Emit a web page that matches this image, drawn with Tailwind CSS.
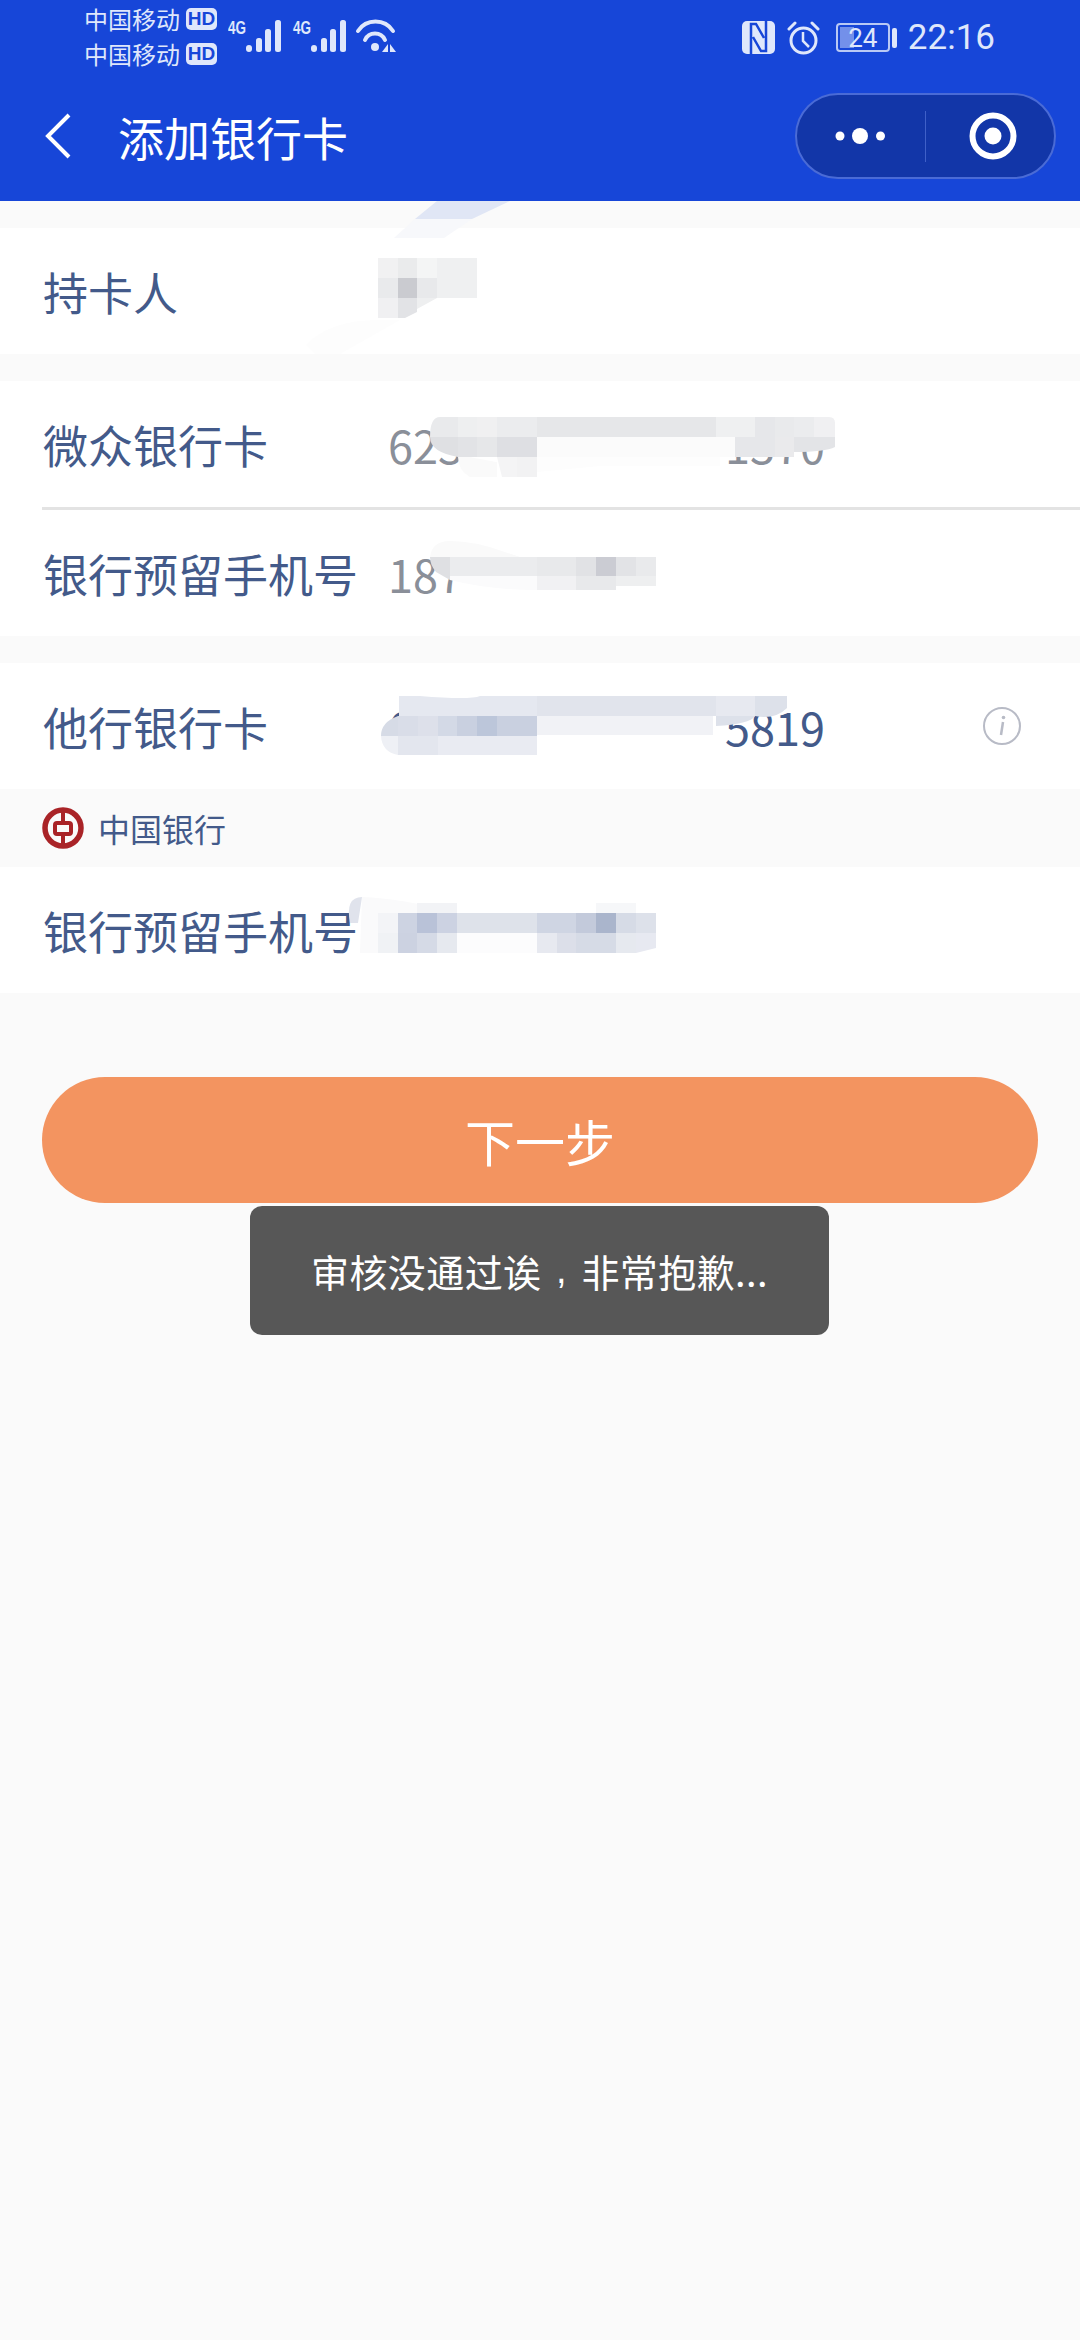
<!DOCTYPE html>
<html lang="zh-CN">
<head>
    <meta charset="UTF-8">
    <meta name="viewport" content="width=device-width, initial-scale=1.0">
    <title>添加银行卡</title>
    <script src="https://cdn.jsdelivr.net/npm/@tailwindcss/browser@4"></script>
</head>
<body class="relative bg-[#fafafa] h-[2340px] w-[1080px] overflow-hidden font-['Noto_Sans_CJK_SC',sans-serif]">
    <!-- Header -->
    <header class="bg-[#1746d8] h-[201px] text-white">
        <!-- Status bar -->
        <div class="flex items-start h-[72px] text-[#dfe7fb]">
            <div class="ml-[84px] mt-[1px] flex flex-col text-[24px] leading-[35px]">
                <div class="flex items-center">中国移动<span class="ml-[6px] bg-[#dfe7fb] text-[#1746d8] rounded-[5px] w-[31px] h-[22px] flex items-center justify-center text-[19px] font-bold font-['Liberation_Sans',sans-serif]">HD</span></div>
                <div class="flex items-center">中国移动<span class="ml-[6px] bg-[#dfe7fb] text-[#1746d8] rounded-[5px] w-[31px] h-[22px] flex items-center justify-center text-[19px] font-bold font-['Liberation_Sans',sans-serif]">HD</span></div>
            </div>
            <svg class="ml-[11px] mt-[16px]" width="170" height="40" viewBox="0 0 170 40" fill="#dfe7fb">
                <text x="0" y="18" font-size="19" font-weight="700" font-family="Liberation Sans" textLength="18" lengthAdjust="spacingAndGlyphs">4G</text>
                <rect x="18" y="29" width="6" height="7" rx="3"/><rect x="28" y="22" width="6" height="14" rx="2.5"/><rect x="37" y="13" width="6" height="23" rx="2.5"/><rect x="47" y="4" width="6" height="32" rx="2.5"/>
                <text x="65" y="18" font-size="19" font-weight="700" font-family="Liberation Sans" textLength="18" lengthAdjust="spacingAndGlyphs">4G</text>
                <rect x="83" y="29" width="6" height="7" rx="3"/><rect x="93" y="22" width="6" height="14" rx="2.5"/><rect x="102" y="13" width="6" height="23" rx="2.5"/><rect x="112" y="4" width="6" height="32" rx="2.5"/>
                <g fill="none" stroke="#dfe7fb" stroke-width="4" stroke-linecap="round">
                    <path d="M130 15 A21 21 0 0 1 165 15"/><path d="M137 24 A11 11 0 0 1 157 24"/>
                </g>
                <circle cx="147" cy="31" r="4"/><path d="M160 28 V36 H154 Z M162 28 L168 36 H162 Z"/>
            </svg>
            <div class="ml-auto flex items-center mt-[20px] mr-[85px]">
                <svg width="33" height="33" viewBox="0 0 33 33">
                    <rect x="0" y="0" width="33" height="33" rx="5" fill="#dfe7fb"/>
                    <path d="M9 33 V3 H14 L22 17 M24 0 V30 H19 L11 16" fill="none" stroke="#1746d8" stroke-width="2.5"/>
                </svg>
                <svg class="ml-[12px]" width="33" height="34" viewBox="0 0 33 34" fill="none" stroke="#dfe7fb" stroke-width="3">
                    <circle cx="16.5" cy="19.5" r="12.5"/><path d="M16 11 V20 L22 26" stroke-width="2.5"/><path d="M2 8 L8 2 M31 8 L25 2" stroke-linecap="round"/>
                </svg>
                <div class="ml-[16px] relative w-[54px] h-[29px] border-2 border-[#b9c9f5] rounded-[4px] flex items-center justify-center text-[26px] leading-none font-['Roboto',sans-serif]">
                    <div class="absolute left-[2px] top-[2px] bottom-[2px] w-[14px] bg-[#7390ea]"></div>
                    <span class="relative">24</span>
                </div>
                <div class="ml-[2px] w-[5px] h-[20px] bg-[#dfe7fb] rounded-[2px]"></div>
                <div class="ml-[11px] text-[35px] leading-none font-['Roboto',sans-serif]">22:16</div>
            </div>
        </div>
        <!-- Nav bar -->
        <div class="flex items-center h-[129px] pb-[1px]">
            <svg class="ml-[44px]" width="27" height="46" viewBox="0 0 27 46" fill="none" stroke="white" stroke-width="4">
                <path d="M25 2 L4 23 L25 44"/>
            </svg>
            <h1 class="ml-[47px] text-[46px] leading-none font-normal">添加银行卡</h1>
            <div class="ml-auto mr-[24px] w-[261px] h-[86px] rounded-full bg-[#1236a8] border-2 border-[#4a6bd6] flex items-center">
                <svg class="ml-[29px]" width="60" height="20" viewBox="0 0 60 20" fill="white">
                    <circle cx="14" cy="10" r="4.5"/><circle cx="34" cy="10" r="8"/><circle cx="54.5" cy="10" r="4.5"/>
                </svg>
                <div class="ml-[39px] w-[1px] h-[51px] bg-[#3f60c8]"></div>
                <svg class="ml-[43px]" width="48" height="48" viewBox="0 0 48 48">
                    <circle cx="24" cy="24" r="20.5" fill="none" stroke="white" stroke-width="6"/><circle cx="24" cy="24" r="8.5" fill="white"/>
                </svg>
            </div>
        </div>
    </header>

    <main class="text-[#435a8a] text-[45px] leading-none">
        <section class="mt-[27px] bg-white h-[126px] flex items-center pl-[43px]">持卡人</section>

        <section class="mt-[27px] bg-white">
            <div class="h-[126px] flex items-center pl-[43px]">
                <span class="w-[345px]">微众银行卡</span>
                <span class="w-[437px] flex justify-between text-[#8a8f99]"><span>623</span><span>1370</span></span>
            </div>
            <div class="ml-[42px] h-[3px] bg-[#e3e3e3]"></div>
            <div class="h-[126px] flex items-center pl-[43px]">
                <span class="w-[345px]">银行预留手机号</span>
                <span class="text-[#8a8f99]">187</span>
            </div>
        </section>

        <section class="mt-[27px] bg-white h-[126px] flex items-center pl-[43px] pr-[58px]">
            <span class="w-[345px]">他行银行卡</span>
            <span class="w-[437px] flex justify-between"><span>6217</span><span>5819</span></span>
            <svg class="ml-auto" width="40" height="40" viewBox="0 0 40 40" fill="none">
                <circle cx="20" cy="20" r="18" stroke="#b8bbc6" stroke-width="2"/>
                <path d="M21 16 L19 29" stroke="#b8bbc6" stroke-width="2.5"/><circle cx="21.5" cy="11.5" r="1.8" fill="#b8bbc6"/>
            </svg>
        </section>
        <div class="h-[78px] flex items-center pl-[42px] text-[32px]">
            <svg width="42" height="42" viewBox="0 0 42 42" fill="none" stroke="#a92327">
                <circle cx="21" cy="21" r="18" stroke-width="5.5"/>
                <rect x="13" y="16" width="16" height="11" rx="2" stroke-width="4"/>
                <path d="M21 4 V16 M21 27 V38" stroke-width="4"/>
            </svg>
            <span class="ml-[14px]">中国银行</span>
        </div>
        <section class="bg-white h-[126px] flex items-center pl-[43px]">银行预留手机号</section>

        <div class="mt-[84px] mx-[42px] h-[126px] rounded-full bg-[#f39460] text-white text-[50px] flex items-center justify-center">下一步</div>
    </main>

    <!-- Toast -->
    <div class="absolute left-[250px] top-[1206px] w-[579px] h-[129px] rounded-[12px] bg-[#575757] text-white text-[38px] tracking-[0.4px] flex items-center justify-center">审核没通过诶<span class="w-[40px] text-center font-['Liberation_Sans',sans-serif]">,</span>非常抱歉...</div>

    <!-- Redaction smears over the values -->
    <svg class="absolute left-0 top-0 pointer-events-none" width="1080" height="1000" viewBox="0 0 1080 1000">
        <path d="M437 201 H510 L472 219 H415 Z" fill="#e0e6f5"/>
        <path d="M415 219 H472 L444 238 H394 Z" fill="#f7f8fb"/>
        <path d="M306 345 Q330 320 378 320 H400 L340 354 H316 Z" fill="#fdfdfd"/>
        <!-- holder name -->
        <rect x="378" y="258" width="20" height="20" fill="#f1f1f2"/><rect x="398" y="258" width="19" height="20" fill="#eaebec"/><rect x="417" y="258" width="20" height="20" fill="#f4f5f5"/><rect x="437" y="258" width="40" height="40" fill="#eff0f1"/>
        <rect x="378" y="278" width="20" height="20" fill="#e9eaec"/><rect x="398" y="278" width="19" height="20" fill="#cacbd0"/><rect x="417" y="278" width="20" height="20" fill="#e8e9eb"/>
        <rect x="378" y="298" width="20" height="20" fill="#f0f0f2"/><path d="M398 298 H417 V312 L405 318 H398 Z" fill="#e2e3e6"/><path d="M417 298 H437 L417 309 Z" fill="#eeeff0"/>
        <!-- card number -->
        <path d="M430 437 Q430 417 440 417 H458 V437 Z" fill="#e9eaec"/><rect x="458" y="417" width="19" height="20" fill="#eeeff0"/><rect x="477" y="417" width="20" height="20" fill="#f0f0f1"/><rect x="497" y="417" width="40" height="20" fill="#ebecee"/><rect x="537" y="417" width="179" height="20" fill="#e6e7e9"/><rect x="716" y="417" width="39" height="20" fill="#eff0f1"/><rect x="755" y="417" width="20" height="20" fill="#e6e7ea"/><rect x="775" y="417" width="19" height="20" fill="#e9eaec"/><rect x="794" y="417" width="20" height="20" fill="#ebecee"/><path d="M814 417 H829 Q835 417 835 423 V437 H814 Z" fill="#f0f0f2"/>
        <path d="M430 437 H458 V457 Q430 452 430 437 Z" fill="#dfe0e3"/><rect x="458" y="437" width="19" height="20" fill="#e2e3e6"/><rect x="477" y="437" width="20" height="20" fill="#e6e7e9"/><rect x="497" y="437" width="40" height="20" fill="#dedfe3"/><rect x="537" y="437" width="198" height="20" fill="#fbfbfb"/><rect x="735" y="437" width="40" height="20" fill="#e6e7ea"/><rect x="775" y="437" width="19" height="20" fill="#eaeaec"/><path d="M794 437 H835 V447 Q825 452 794 452 Z" fill="#e3e4e7"/>
        <path d="M458 457 H470 Q495 462 497 462 V477 H470 Q458 470 458 457 Z" fill="#fafafa"/><path d="M497 457 H517 V477 H502 Z" fill="#f4f4f5"/><rect x="517" y="457" width="20" height="20" fill="#f2f2f3"/><path d="M537 457 H720 V466 H600 L537 472 Z" fill="#fdfdfd"/>
        <!-- phone -->
        <path d="M430 557 Q432 541 450 541 Q475 541 505 552 L520 557 Z" fill="#fafafa"/>
        <path d="M430 557 H450 V580 L436 572 Q430 565 430 557 Z" fill="#dfe0e3"/><rect x="450" y="557" width="87" height="19" fill="#ebecee"/><rect x="537" y="557" width="39" height="19" fill="#e8e9eb"/><rect x="576" y="557" width="20" height="19" fill="#e1e2e5"/><rect x="596" y="557" width="20" height="19" fill="#cbccd3"/><rect x="616" y="557" width="20" height="19" fill="#e2e3e6"/><rect x="636" y="557" width="20" height="19" fill="#e9eaec"/>
        <path d="M450 576 H537 V590 Q490 590 450 580 Z" fill="#fbfbfc"/><rect x="537" y="576" width="39" height="14" fill="#f1f1f3"/><rect x="576" y="576" width="40" height="14" fill="#e8e9eb"/><rect x="616" y="576" width="40" height="10" fill="#eeeff0"/>
        <!-- other bank card -->
        <path d="M399 696 H420 Q470 700 480 696 H537 V716 H399 Z" fill="#e5e8f0"/><rect x="537" y="696" width="179" height="20" fill="#e1e4ec"/><rect x="716" y="696" width="39" height="20" fill="#e7e9f0"/><path d="M755 696 H787 V708 Q775 720 755 716 Z" fill="#dde1ea"/><path d="M716 716 H755 Q750 724 716 726 Z" fill="#dde1ea"/>
        <path d="M398 716 V736 H381 Q381 722 398 716 Z" fill="#d6dbe6"/><rect x="398" y="716" width="20" height="20" fill="#d9dde8"/><rect x="418" y="716" width="20" height="20" fill="#dde0ea"/><rect x="438" y="716" width="19" height="20" fill="#d3d9e6"/><rect x="457" y="716" width="20" height="20" fill="#c9d0e0"/><rect x="477" y="716" width="20" height="20" fill="#bcc6da"/><rect x="497" y="716" width="40" height="20" fill="#c9d0e0"/><rect x="537" y="716" width="176" height="19" fill="#f1f2f6"/>
        <path d="M381 736 H398 V755 Q382 752 381 736 Z" fill="#eef0f5"/><rect x="398" y="736" width="40" height="19" fill="#e3e6ee"/><rect x="438" y="736" width="99" height="19" fill="#e9ebf2"/>
        <!-- second phone -->
        <path d="M362 897 Q400 898 457 913 H378 V953 H360 Z" fill="#fafafb"/>
        <path d="M350 923 Q345 897 362 897 L358 923 Z" fill="#e0e3ec"/>
        <rect x="417" y="903" width="40" height="10" fill="#f2f3f6"/><rect x="596" y="903" width="40" height="10" fill="#f6f7f9"/>
        <rect x="378" y="913" width="20" height="20" fill="#f3f4f7"/><rect x="398" y="913" width="19" height="20" fill="#cdd3e2"/><rect x="417" y="913" width="20" height="20" fill="#b9c2d8"/><rect x="437" y="913" width="20" height="20" fill="#ccd2e2"/><rect x="457" y="913" width="80" height="20" fill="#dee2ea"/><rect x="537" y="913" width="39" height="20" fill="#cfd5e3"/><rect x="576" y="913" width="20" height="20" fill="#c3cadb"/><rect x="596" y="913" width="20" height="20" fill="#aab5cc"/><rect x="616" y="913" width="20" height="20" fill="#d6dbe6"/><rect x="636" y="913" width="20" height="20" fill="#dde1ea"/>
        <rect x="378" y="933" width="20" height="20" fill="#f0f2f5"/><rect x="398" y="933" width="19" height="20" fill="#ccd2e1"/><rect x="417" y="933" width="20" height="20" fill="#d5dae6"/><rect x="437" y="933" width="20" height="20" fill="#e6e9ef"/><rect x="457" y="933" width="80" height="20" fill="#fcfcfd"/><rect x="537" y="933" width="20" height="20" fill="#e7e9f0"/><rect x="557" y="933" width="19" height="20" fill="#dcdfe9"/><rect x="576" y="933" width="40" height="20" fill="#d6dbe6"/><rect x="616" y="933" width="20" height="20" fill="#e6e9ef"/><path d="M636 933 H656 V948 L636 953 Z" fill="#e7e9f1"/>
    </svg>
</body>
</html>
